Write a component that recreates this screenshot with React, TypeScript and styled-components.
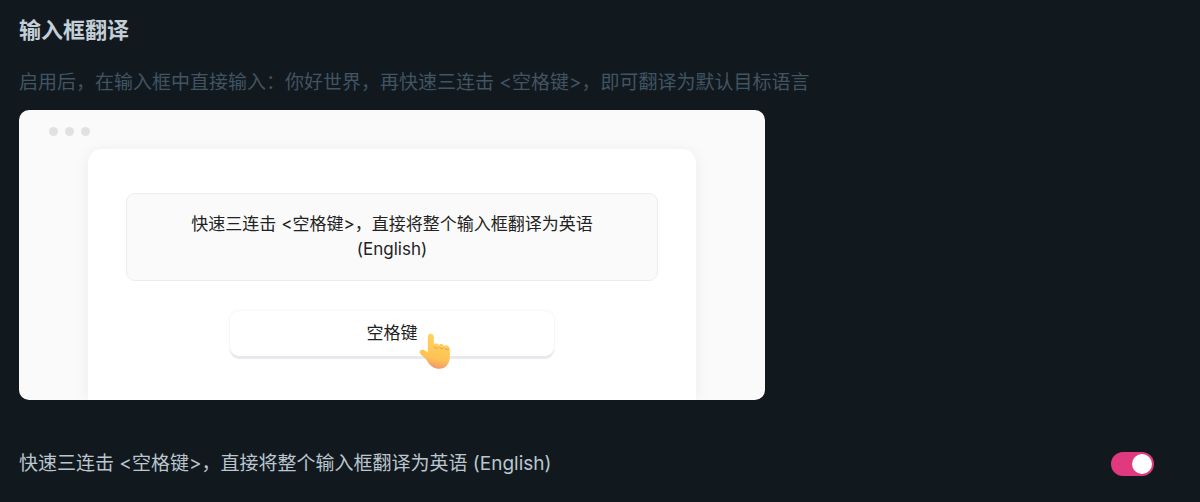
import React, { useState } from "react";
import styled, { createGlobalStyle } from "styled-components";

const GlobalStyle = createGlobalStyle`
  *, *::before, *::after { box-sizing: border-box; }
  body {
    margin: 0;
    background: #11191f;
    color: #bbc6ce;
    font-family: Inter, "Noto Sans CJK SC", sans-serif;
    font-size: 19px;
    line-height: 28px;
  }
`;

const Page = styled.main`
  padding: 15px 46px 24px 19px;
`;

const Title = styled.h1`
  margin: 0 0 24px;
  font-size: 22px;
  line-height: 30px;
  font-weight: 700;
  color: #c3ced6;
`;

const Description = styled.p`
  margin: 0 0 13px;
  color: #415462;
`;

const Preview = styled.figure`
  display: flex;
  flex-direction: column;
  gap: 13px;
  margin: 0 0 50px;
  max-width: 746px;
  padding: 17px 69px 0;
  overflow: hidden;
  border-radius: 10px;
  background: #fafafa;
`;

const WindowDots = styled.div`
  display: flex;
  gap: 7px;
  margin-left: -39px;
`;

const Dot = styled.span`
  width: 9px;
  height: 9px;
  border-radius: 50%;
  background: #e1e1e1;
`;

const Sheet = styled.div`
  display: flex;
  flex-direction: column;
  align-items: center;
  gap: 30px;
  padding: 44px 38px;
  border-radius: 14px 14px 0 0;
  background: #fff;
  box-shadow: 0 2px 16px rgba(0, 0, 0, 0.06);
  color: #222;
  font-size: 17px;
  line-height: 25px;
`;

const SampleField = styled.p`
  width: 100%;
  margin: 0;
  padding: 18px 56px;
  border: 1px solid #ececec;
  border-radius: 9px;
  background: #fafafa;
  text-align: center;
`;

const KeyWrap = styled.div`
  position: relative;
  width: 100%;
  max-width: 324px;
`;

const SpaceKey = styled.button`
  display: block;
  width: 100%;
  padding: 10px;
  border: 0;
  border-radius: 9px;
  background: #fff;
  box-shadow: 0 3px 1px #e6eaee, 0 0 3px rgba(0, 0, 0, 0.08);
  color: inherit;
  font: inherit;
`;

const Hand = styled.svg`
  position: absolute;
  top: 22px;
  left: 189px;
  width: 34px;
  height: 38px;
`;

const SettingRow = styled.label`
  display: flex;
  align-items: center;
  justify-content: space-between;
  gap: 24px;
`;

const Switch = styled.input`
  appearance: none;
  flex: none;
  width: 43px;
  height: 24px;
  margin: 0;
  padding: 2px;
  border-radius: 12px;
  background: #596b78;
  cursor: pointer;

  &::before {
    content: "";
    display: block;
    width: 20px;
    height: 20px;
    border-radius: 50%;
    background: #fff;
  }

  &:checked {
    background: #e0397d;
  }

  &:checked::before {
    margin-left: auto;
  }
`;

function PointingHand() {
  return (
    <Hand viewBox="0 0 34 38" aria-hidden="true">
      <defs>
        <linearGradient id="skin" x1="0.6" y1="0" x2="0.42" y2="1">
          <stop offset="0" stopColor="#ffd45f" />
          <stop offset="0.7" stopColor="#fdc254" />
          <stop offset="1" stopColor="#f0936f" />
        </linearGradient>
      </defs>
      <path
        d="M8.8 4C8.8 2 10.2.8 11.8.8S14.9 2.1 14.9 4.1V12C15.4 10.2 19 10 19.9 12.4C20.6 10.5 24.2 10.6 25.1 13.2C26.2 11.6 30.4 12 30.7 16.2C31 18.6 31 21.5 30.9 24C30.5 31.4 26.4 35.8 20.5 35.8C14.4 35.8 10.6 32.2 7.6 26.9C5.4 24.4 2.4 22.8 1 20.3C0 18.1 1.7 16.4 4 16.8C6 17.2 7.4 18.3 8.8 19.5Z"
        fill="url(#skin)"
      />
      <path
        d="M15.2 13.8C15.6 15.5 18.2 15.8 19.1 14.3M20.8 14.5C21.3 16 23.6 16.4 24.3 15M26.1 15.4C26.7 16.9 28.7 17.2 29.6 16.1"
        fill="none"
        stroke="#e6a044"
        strokeWidth="1"
        strokeLinecap="round"
      />
    </Hand>
  );
}

export default function App() {
  const [enabled, setEnabled] = useState(true);

  return (
    <>
      <GlobalStyle />
      <Page lang="zh-CN">
        <Title>输入框翻译</Title>
        <Description>
          启用后，在输入框中直接输入：你好世界，再快速三连击 &lt;空格键&gt;，即可翻译为默认目标语言
        </Description>
        <Preview>
          <WindowDots>
            <Dot />
            <Dot />
            <Dot />
          </WindowDots>
          <Sheet>
            <SampleField>快速三连击 &lt;空格键&gt;，直接将整个输入框翻译为英语 (English)</SampleField>
            <KeyWrap>
              <SpaceKey type="button">空格键</SpaceKey>
              <PointingHand />
            </KeyWrap>
          </Sheet>
        </Preview>
        <SettingRow>
          <span>快速三连击 &lt;空格键&gt;，直接将整个输入框翻译为英语 (English)</span>
          <Switch
            type="checkbox"
            role="switch"
            checked={enabled}
            onChange={(event) => setEnabled(event.target.checked)}
          />
        </SettingRow>
      </Page>
    </>
  );
}
